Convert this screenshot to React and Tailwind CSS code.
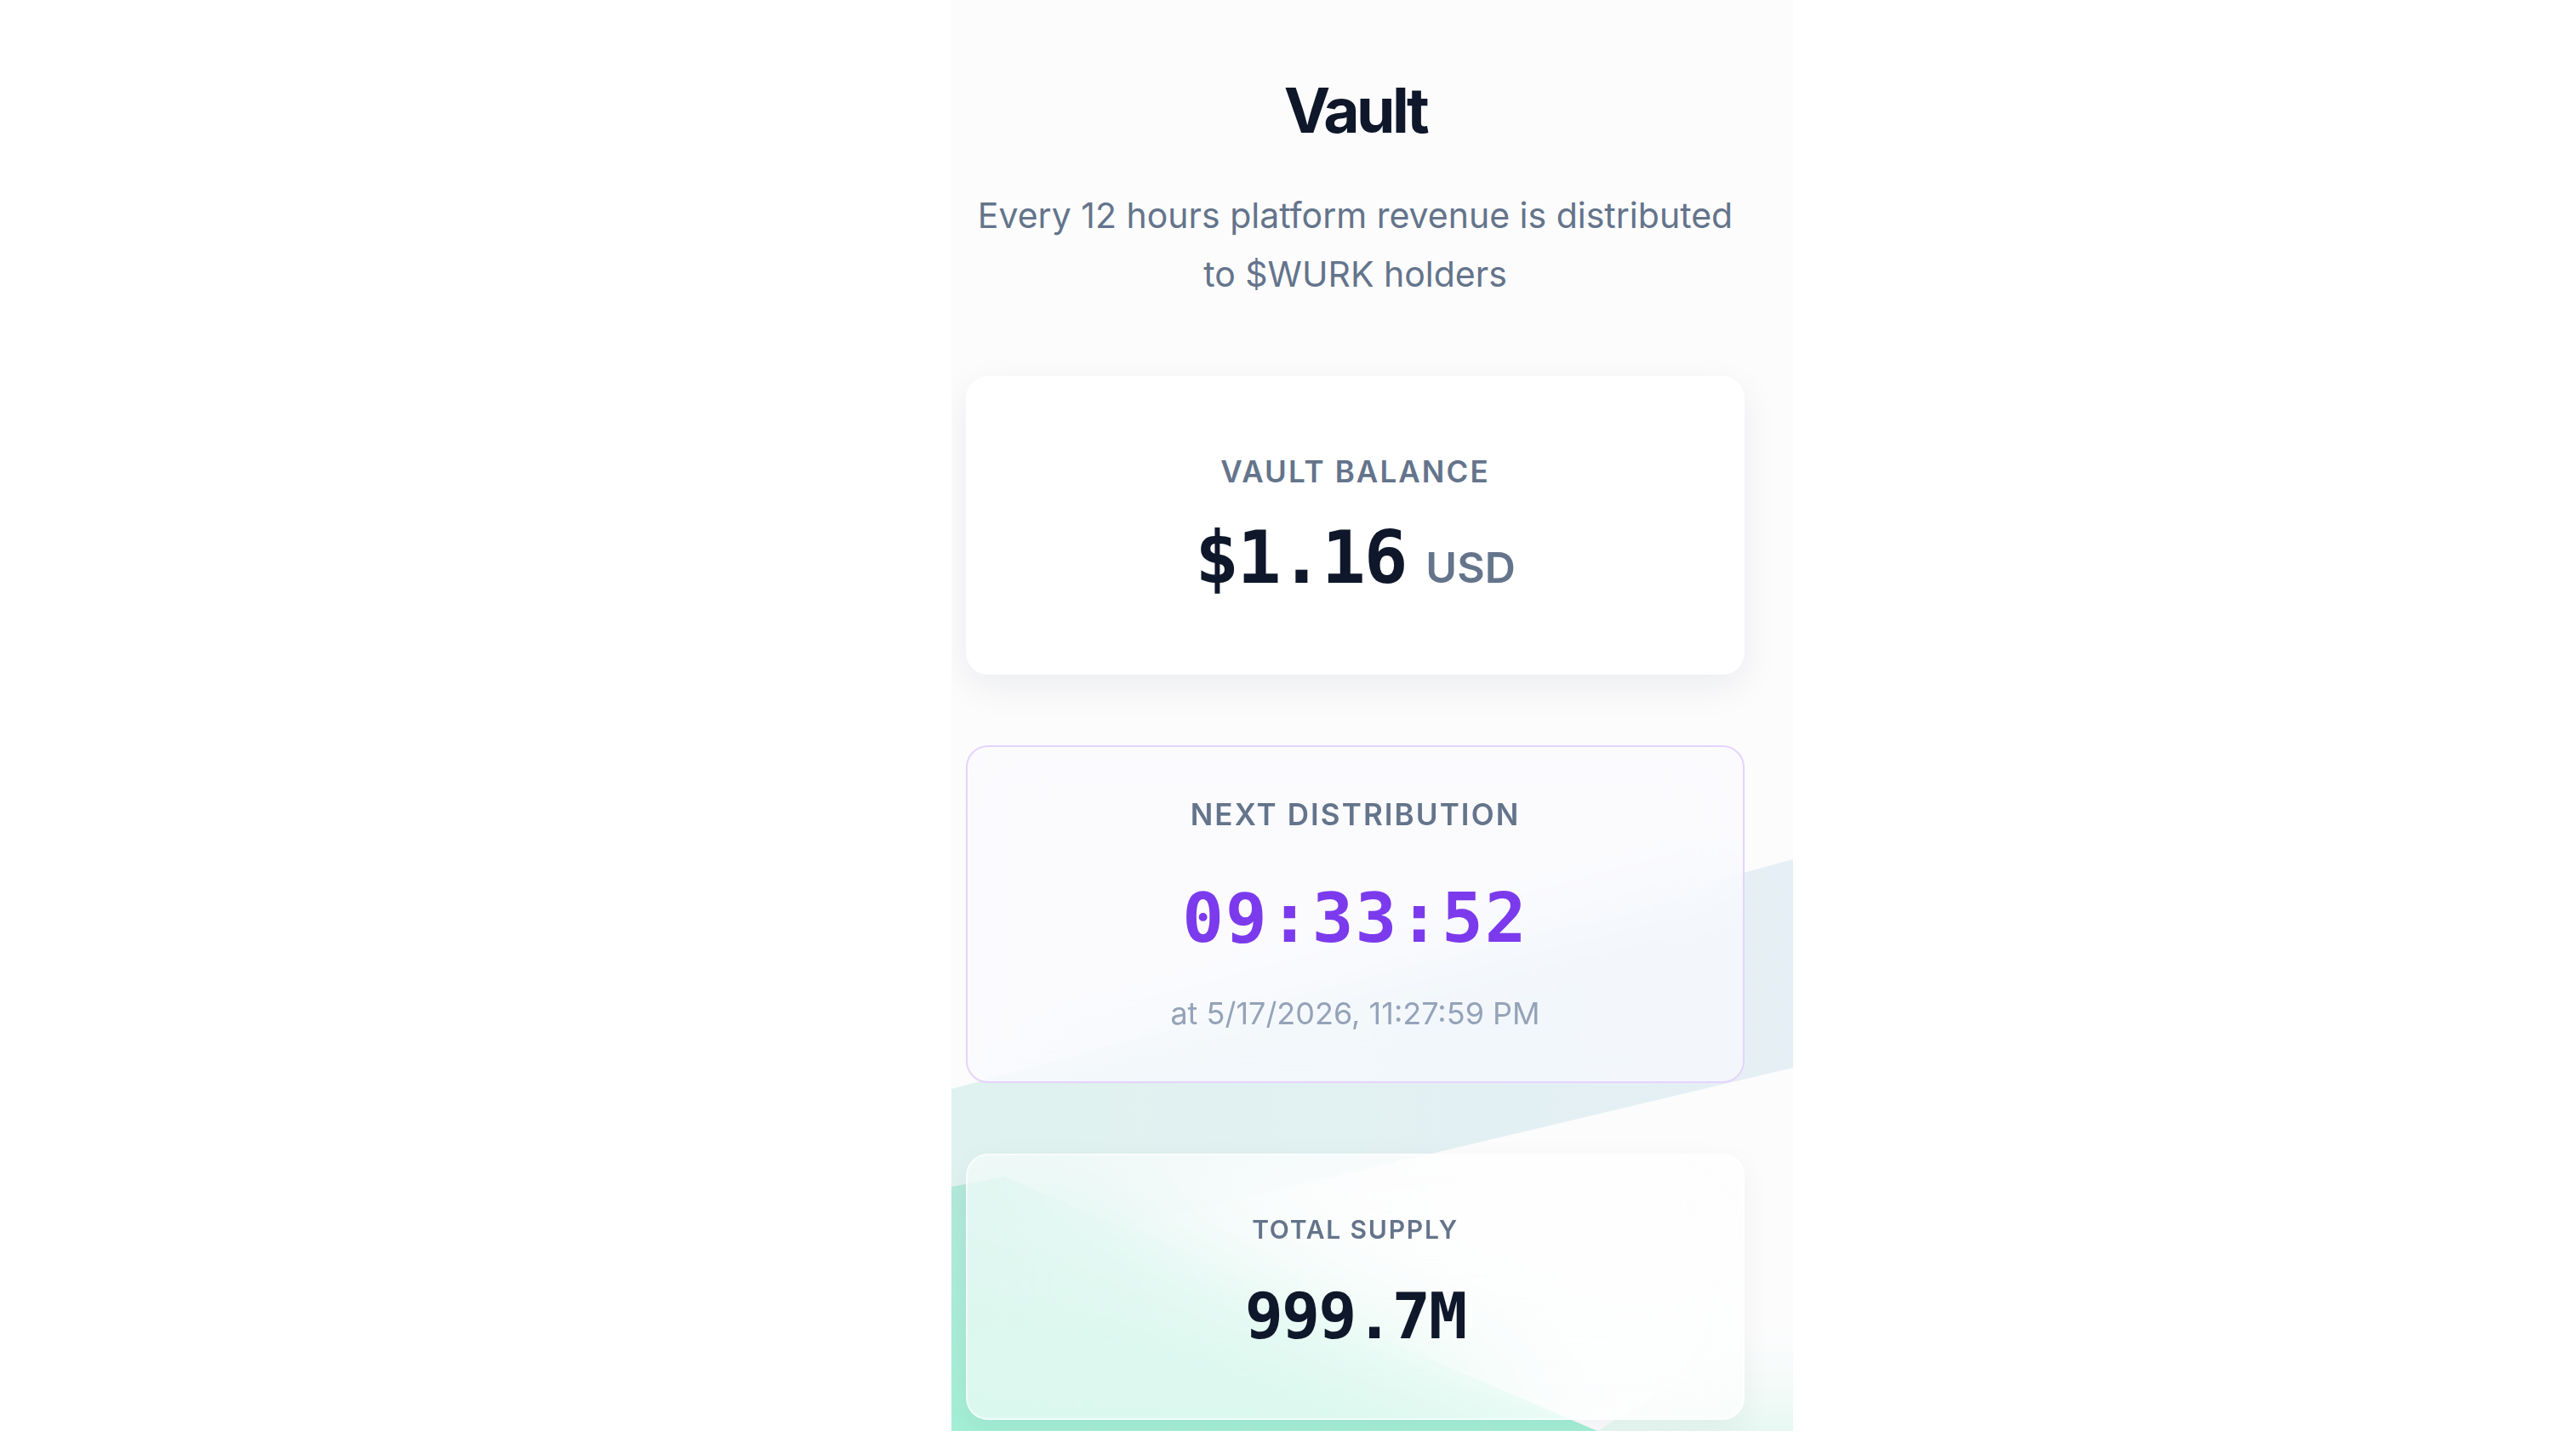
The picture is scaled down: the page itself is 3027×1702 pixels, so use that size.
import React from "react";

// Decorative angled bands painted behind the stat cards
function Backdrop() {
  return (
    <svg
      className="pointer-events-none absolute inset-0 h-full w-full"
      viewBox="0 0 989 1682"
      preserveAspectRatio="none"
      aria-hidden="true"
    >
      <defs>
        <linearGradient id="band" x1="0" y1="0" x2="1" y2="0">
          <stop offset="0" stopColor="#dff2ef" />
          <stop offset="1" stopColor="#e5eff5" />
        </linearGradient>
        <linearGradient id="mint" x1="0" y1="0" x2="0" y2="1">
          <stop offset="0" stopColor="#b3e9da" />
          <stop offset="1" stopColor="#a4efd6" />
        </linearGradient>
        <linearGradient id="haze" x1="0" y1="0" x2="0" y2="1">
          <stop offset="0" stopColor="#fcfcfd" stopOpacity="0" />
          <stop offset="1" stopColor="#e6f8f1" />
        </linearGradient>
      </defs>
      <polygon points="0,1280 989,1010 989,1255 0,1490" fill="url(#band)" />
      <polygon points="759,1682 989,1682 989,1540" fill="url(#haze)" />
      <polygon points="0,1395 62,1383 759,1682 0,1682" fill="url(#mint)" />
    </svg>
  );
}

function Label({ children, size }) {
  return (
    <div
      className={`font-semibold uppercase leading-none tracking-[0.06em] text-[#64748b] ${size}`}
    >
      {children}
    </div>
  );
}

export default function App() {
  return (
    <div className="flex min-h-screen w-full bg-white font-['Inter','Noto_Sans',sans-serif]">
      <aside className="w-[198px] shrink-0" />
      <main className="flex flex-1 justify-center">
        <section className="relative h-[1682px] w-[989px] overflow-hidden bg-[#fcfcfd] pl-[17px] pr-[57px]">
          <Backdrop />
          <div className="relative flex flex-col items-center pt-[93px]">
            <h1 className="text-[73px] font-bold leading-none tracking-tighter text-[#0f172a]">
              Vault
            </h1>
            <p className="mt-[53px] max-w-[900px] text-center text-[41px] leading-[69px] text-[#64748b]">
              Every 12 hours platform revenue is distributed to $WURK holders
            </p>

            {/* Vault balance */}
            <div className="mt-[85px] flex h-[351px] w-full flex-col items-center justify-center rounded-[26px] bg-white shadow-[0_14px_44px_rgba(15,23,42,0.07)]">
              <Label size="text-[35px]">Vault Balance</Label>
              <div className="mt-[40px] flex items-baseline gap-[23px]">
                <span className="font-['DejaVu_Sans_Mono',monospace] text-[86px] font-bold leading-none tracking-tight text-[#0f172a]">
                  $1.16
                </span>
                <span className="text-[50px] font-semibold leading-none text-[#64748b]">
                  USD
                </span>
              </div>
            </div>

            {/* Countdown */}
            <div className="mt-[83px] flex h-[397px] w-full flex-col items-center justify-center rounded-[26px] border-2 border-[#e6d3fc] bg-[#fafbff]/65 backdrop-blur-2xl">
              <Label size="text-[35px]">Next Distribution</Label>
              <div className="mt-[64px] font-['DejaVu_Sans_Mono',monospace] text-[81px] font-bold leading-none tracking-wide text-[#7c3aed]">
                09:33:52
              </div>
              <div className="mt-[53px] text-[36px] leading-none text-[#94a3b8]">
                at 5/17/2026, 11:27:59 PM
              </div>
            </div>

            {/* Supply */}
            <div className="mt-[83px] flex h-[313px] w-full flex-col items-center justify-center rounded-[26px] border-2 border-white/60 bg-white/60 pb-[11px] shadow-[0_10px_34px_rgba(15,23,42,0.05)] backdrop-blur-3xl">
              <Label size="text-[30px]">Total Supply</Label>
              <div className="mt-[50px] font-['DejaVu_Sans_Mono',monospace] text-[75px] font-bold leading-none tracking-tight text-[#0f172a]">
                999.7M
              </div>
            </div>
          </div>
        </section>
      </main>
    </div>
  );
}
